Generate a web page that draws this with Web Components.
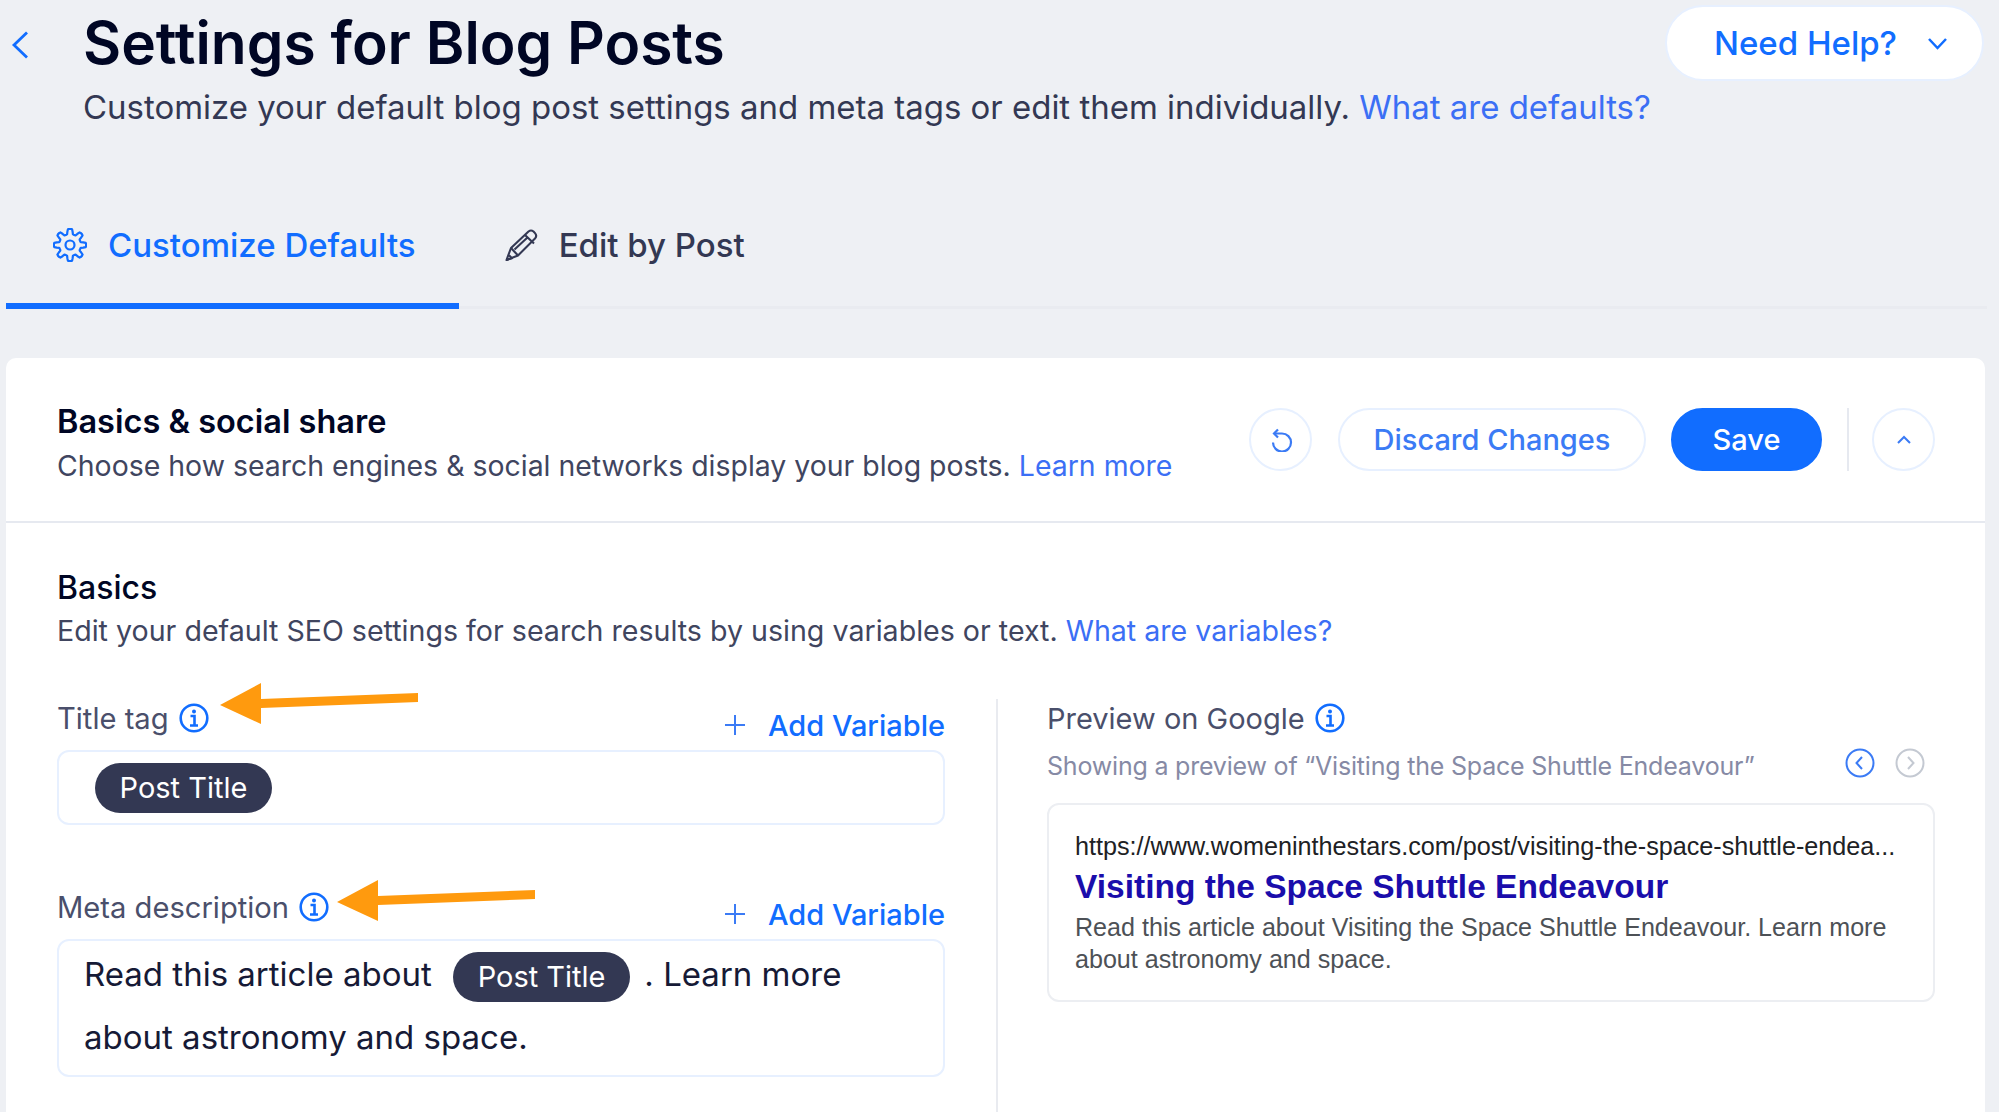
<!DOCTYPE html>
<html lang="en">
<head>
<meta charset="utf-8">
<title>Settings for Blog Posts</title>
<style>
  html, body { margin: 0; height: 100%; overflow: hidden; background: #eef0f4; }
  body { font-family: Inter, "Liberation Sans", sans-serif; color: #000624; }
</style>
</head>
<body>
<wx-page>
  <wx-page-header>
    <span slot="title">Settings for Blog Posts</span>
    <span slot="subtitle">Customize your default blog post settings and meta tags or edit them individually.</span>
    <span slot="link">What are defaults?</span>
  </wx-page-header>
  <wx-tabs>
    <wx-tab active icon="gear">Customize Defaults</wx-tab>
    <wx-tab icon="pencil">Edit by Post</wx-tab>
  </wx-tabs>
  <wx-card>
    <wx-card-header>
      <span slot="title">Basics &amp; social share</span>
      <span slot="subtitle">Choose how search engines &amp; social networks display your blog posts.</span>
      <span slot="link">Learn more</span>
    </wx-card-header>
    <wx-section>
      <span slot="title">Basics</span>
      <span slot="subtitle">Edit your default SEO settings for search results by using variables or text.</span>
      <span slot="link">What are variables?</span>
      <wx-field slot="left" label="Title tag" arrow-x="163" arrow-y="-18">
        <wx-input single><wx-pill>Post Title</wx-pill></wx-input>
      </wx-field>
      <wx-field slot="left" label="Meta description" arrow-x="280" arrow-y="-10">
        <wx-input>Read this article about <wx-pill>Post Title</wx-pill> . Learn more<br>about astronomy and space.</wx-input>
      </wx-field>
      <wx-google-preview slot="right"></wx-google-preview>
    </wx-section>
  </wx-card>
</wx-page>

<script>
const ICONS = {
  back: '<svg width="18" height="28" viewBox="0 0 18 28"><path d="M16 1.5 3 14l13 12.5" fill="none" stroke="currentColor" stroke-width="2.8"/></svg>',
  down: '<svg width="21" height="13" viewBox="0 0 21 13"><path d="M2 2l8.500 9 8.500-9" fill="none" stroke="currentColor" stroke-width="2.500"/></svg>',
  up: '<svg width="16" height="10" viewBox="0 0 16 10"><path d="M2 8l6-6 6 6" fill="none" stroke="currentColor" stroke-width="2"/></svg>',
  pencil: '<svg width="34" height="34" viewBox="0 0 34 34" fill="none" stroke="currentColor" stroke-width="2.1" stroke-linejoin="round"><path d="M2.5 32 7 20 24.5 3.5q2.5-2 5 0l1.500 1.600q2.400 2.800 0 5.400L14 27.500z"/><path d="M21 7l9 8.500M7 20l7 7.500M10.500 21.500 24 9M2.500 32l5.500-1.800-3-3"/></svg>',
  undo: '<svg width="24" height="24" viewBox="0 0 24 24" fill="none" stroke="currentColor" stroke-width="2.2"><path d="M5 5.500h8a9 9 0 1 1-9 9"/><path d="M9 1.500 5 5.500l4 4"/></svg>',
  plus: '<svg width="22" height="22" viewBox="0 0 22 22"><path d="M11 1v20M1 11h20" stroke="currentColor" stroke-width="2"/></svg>',
  info: '<svg width="30" height="30" viewBox="0 0 30 30" fill="none" stroke="currentColor"><circle cx="15" cy="15" r="13.300" stroke-width="2.600"/><circle cx="15" cy="8.500" r="2" fill="currentColor" stroke="none"/><path d="M11.500 13h4v9M11 22.500h8" stroke-width="2.600"/></svg>',
  prev: '<svg width="30" height="30" viewBox="0 0 30 30" fill="none" stroke="currentColor" stroke-width="2"><circle cx="15" cy="15" r="13.500"/><path d="M17 9l-5.500 6 5.500 6"/></svg>',
  next: '<svg width="30" height="30" viewBox="0 0 30 30" fill="none" stroke="currentColor" stroke-width="2"><circle cx="15" cy="15" r="13.500"/><path d="M13 9l5.500 6-5.500 6"/></svg>'
};

// eight lobed gear outline, flat topped teeth
function gearIcon() {
  let d = '';
  for (let i = 0; i < 96; i++) {
    const a = i / 96 * Math.PI * 2;
    const t = Math.max(-1, Math.min(1, Math.cos(a * 8) * 1.8));
    const r = 13.5 + 2.6 * t;
    d += (i ? 'L' : 'M') + (17 + r * Math.sin(a)).toFixed(2) + ' ' + (17 - r * Math.cos(a)).toFixed(2);
  }
  return `<svg width="34" height="34" viewBox="0 0 34 34" fill="none" stroke="currentColor" stroke-width="2.2" stroke-linejoin="round"><path d="${d}Z"/><circle cx="17" cy="17" r="4.500"/></svg>`;
}
ICONS.gear = gearIcon();

class Base extends HTMLElement {
  render(html) {
    this.attachShadow({ mode: 'open' });
    this.shadowRoot.innerHTML = html;
  }
}

class Page extends Base {
  constructor() {
    super();
    this.render(`<style>
      :host { display: block; position: relative; height: 1112px; overflow: hidden; }
    </style><slot></slot>`);
  }
}

class PageHeader extends Base {
  constructor() {
    super();
    this.render(`<style>
      :host { display: flex; height: 167px; align-items: flex-start; box-sizing: border-box; padding-right: 15px; }
      .back { color: #116dff; width: 83px; padding: 31px 0 0 11px; box-sizing: border-box; flex: none; line-height: 0; }
      .main { flex: 1; min-width: 0; padding-top: 10px; }
      h1 { margin: 0; font-size: 58.700px; line-height: 66px; font-weight: 600; color: #000624; }
      p { margin: 11px 0 0; font-size: 32.960px; line-height: 40px; color: #333853; }
      .link { color: #3b6ff5; }
      .help { display: flex; align-items: center; box-sizing: border-box; height: 76px; width: 319px; margin-top: 5px; padding: 0 34px 0 47px;
              justify-content: space-between; background: #fff; border: 2px solid #e7f0ff; border-radius: 38px;
              font-size: 33px; font-weight: 500; color: #116dff; flex: none; }
    </style>
    <div class="back">${ICONS.back}</div>
    <div class="main">
      <h1><slot name="title"></slot></h1>
      <p><slot name="subtitle"></slot> <span class="link"><slot name="link"></slot></span></p>
    </div>
    <div class="help"><span>Need Help?</span>${ICONS.down}</div>`);
  }
}

class Tabs extends Base {
  constructor() {
    super();
    this.render(`<style>
      :host { display: flex; box-sizing: border-box; height: 142px; margin: 0 12px 0 6px; border-bottom: 3px solid #e9ebf0; }
    </style><slot></slot>`);
  }
}

class Tab extends Base {
  constructor() {
    super();
    const icon = ICONS[this.getAttribute('icon')];
    this.render(`<style>
      :host { display: flex; align-items: center; gap: 21px; box-sizing: border-box; height: 142px; margin-bottom: -3px;
              padding: 14px 45px 0 45px; font-size: 33px; font-weight: 500; color: #333853; }
      :host([active]) { color: #116dff; border-bottom: 6px solid #116dff; padding: 20px 43px 0 47px; }
      svg { display: block; flex: none; }
    </style>${icon}<span><slot></slot></span>`);
  }
}

class Card extends Base {
  constructor() {
    super();
    this.render(`<style>
      :host { display: block; box-sizing: border-box; margin: 49px 14px 0 6px; height: 760px; background: #fff; border-radius: 10px 10px 0 0; overflow: hidden; }
    </style><slot></slot>`);
  }
}

class Pill extends Base {
  constructor() {
    super();
    this.render(`<style>
      :host { display: inline-flex; align-items: center; justify-content: center; box-sizing: border-box; width: 177px; height: 50px; margin: 0 5px 0 12px;
              background: #333853; color: #fff; border-radius: 25px; font-size: 29px; line-height: 50px; letter-spacing: 0; vertical-align: middle; }
    </style><slot></slot>`);
  }
}

class CardHeader extends Base {
  constructor() {
    super();
    this.render(`<style>
      :host { display: flex; align-items: center; box-sizing: border-box; height: 165px; padding: 0 50px 0 51px; border-bottom: 2px solid #e6e9f0; }
      .text { flex: 1; padding-top: 7px; }
      h2 { margin: 0; font-size: 32.500px; line-height: 42px; font-weight: 600; color: #000624; }
      p { margin: 3px 0 0; font-size: 28.450px; line-height: 40px; color: #40455f; }
      .link { color: #3b6ff5; }
      .btn { display: flex; align-items: center; justify-content: center; box-sizing: border-box; height: 63px; border-radius: 32px;
             border: 2px solid #e7f0ff; color: #3b7bf5; font-size: 29px; font-weight: 500; }
      .round { width: 63px; }
      .discard { width: 308px; margin: 0 25px 0 26px; }
      .save { width: 151px; background: #116dff; border-color: #116dff; color: #fff; }
      .sep { width: 2px; height: 63px; background: #e6e9f0; margin: 0 23px 0 25px; }
    </style>
    <div class="text">
      <h2><slot name="title"></slot></h2>
      <p><slot name="subtitle"></slot> <span class="link"><slot name="link"></slot></span></p>
    </div>
    <div class="btn round">${ICONS.undo}</div>
    <div class="btn discard">Discard Changes</div>
    <div class="btn save">Save</div>
    <div class="sep"></div>
    <div class="btn round">${ICONS.up}</div>`);
  }
}

class Section extends Base {
  constructor() {
    super();
    this.render(`<style>
      :host { display: block; padding: 44px 50px 0 51px; }
      h3 { margin: 0; font-size: 32px; line-height: 42px; font-weight: 500; color: #000624; }
      p { margin: 2px 0 0; font-size: 28.600px; line-height: 40px; color: #40455f; }
      .link { color: #3b6ff5; }
      .cols { display: grid; grid-template-columns: 941px 1fr; margin-top: 48px; }
      .left { display: flex; flex-direction: column; gap: 63px; box-sizing: border-box; padding-right: 51px; border-right: 2px solid #e9ebf0; min-height: 420px; }
      .right { padding-left: 49px; }
    </style>
    <h3><slot name="title"></slot></h3>
    <p><slot name="subtitle"></slot> <span class="link"><slot name="link"></slot></span></p>
    <div class="cols">
      <div class="left"><slot name="left"></slot></div>
      <div class="right"><slot name="right"></slot></div>
    </div>`);
  }
}

class Field extends Base {
  constructor() {
    super();
    this.render(`<style>
      :host { display: block; position: relative; }
      .head { display: flex; justify-content: space-between; height: 51px; }
      .label { display: flex; align-items: center; gap: 10px; height: 38px; font-size: 29.150px; color: #4a4f6b; }
      .info { color: #116dff; line-height: 0; }
      .add { display: flex; align-items: center; gap: 22px; height: 40px; margin-top: 6px; color: #116dff; font-size: 29px; font-weight: 500; }
      .plus { line-height: 0; color: #3b7bf5; }
      .arrow { position: absolute; line-height: 0; }
    </style>
    <div class="head">
      <div class="label"><span>${this.getAttribute('label')}</span><span class="info">${ICONS.info}</span></div>
      <div class="add"><span class="plus">${ICONS.plus}</span><span>Add Variable</span></div>
    </div>
    <slot></slot>
    <svg class="arrow" style="left:${this.getAttribute('arrow-x')}px;top:${this.getAttribute('arrow-y')}px" width="200" height="44" viewBox="0 0 200 44"><path d="M0 24 41 2v16l157-6v9L41 27v16z" fill="#ff9a0e"/></svg>`);
  }
}

class Input extends Base {
  constructor() {
    super();
    this.render(`<style>
      :host { display: block; box-sizing: border-box; border: 2px solid #e7f0ff; border-radius: 12px; padding: 2px 26px 0 25px; font-size: 33px; line-height: 63px;
              color: #161a36; height: 138px; }
      :host([single]) { height: 75px; padding: 0 0 0 22px; line-height: 66px; }
      :host([single]) ::slotted(wx-pill) { margin-left: 14px; }
    </style><slot></slot>`);
  }
}

class GooglePreview extends Base {
  constructor() {
    super();
    this.render(`<style>
      :host { display: block; }
      .label { display: flex; align-items: center; gap: 10px; height: 38px; font-size: 29px; color: #4a4f6b; }
      .info { color: #116dff; line-height: 0; }
      .meta { display: flex; align-items: center; justify-content: space-between; height: 38px; margin-top: 10px; padding-right: 10px; font-size: 25px; letter-spacing: -0.2px; color: #868aa5; }
      .nav { display: flex; gap: 20px; line-height: 0; color: #3b7bf5; margin-top: -6px; }
      .nav .off { color: #c4c9d2; }
      .box { box-sizing: border-box; height: 199px; margin-top: 18px; padding: 26px 26px 0; border: 2px solid #eceef2; border-radius: 12px; font-family: "Liberation Sans", Arial, sans-serif; }
      .url { font-size: 25.200px; line-height: 30px; color: #202124; white-space: nowrap; }
      .ttl { font-size: 33.500px; line-height: 44px; margin-top: 4px; font-weight: 700; color: #1a0dab; }
      .desc { font-size: 25.100px; line-height: 32px; margin-top: 2px; color: #4d5156; }
    </style>
    <div class="label"><span>Preview on Google</span><span class="info">${ICONS.info}</span></div>
    <div class="meta"><span>Showing a preview of “Visiting the Space Shuttle Endeavour”</span>
      <span class="nav"><span>${ICONS.prev}</span><span class="off">${ICONS.next}</span></span></div>
    <div class="box">
      <div class="url">https://www.womeninthestars.com/post/visiting-the-space-shuttle-endea...</div>
      <div class="ttl">Visiting the Space Shuttle Endeavour</div>
      <div class="desc">Read this article about Visiting the Space Shuttle Endeavour. Learn more about astronomy and space.</div>
    </div>`);
  }
}

customElements.define('wx-page', Page);
customElements.define('wx-page-header', PageHeader);
customElements.define('wx-tabs', Tabs);
customElements.define('wx-tab', Tab);
customElements.define('wx-card', Card);
customElements.define('wx-pill', Pill);
customElements.define('wx-card-header', CardHeader);
customElements.define('wx-section', Section);
customElements.define('wx-field', Field);
customElements.define('wx-input', Input);
customElements.define('wx-google-preview', GooglePreview);
</script>
</body>
</html>
